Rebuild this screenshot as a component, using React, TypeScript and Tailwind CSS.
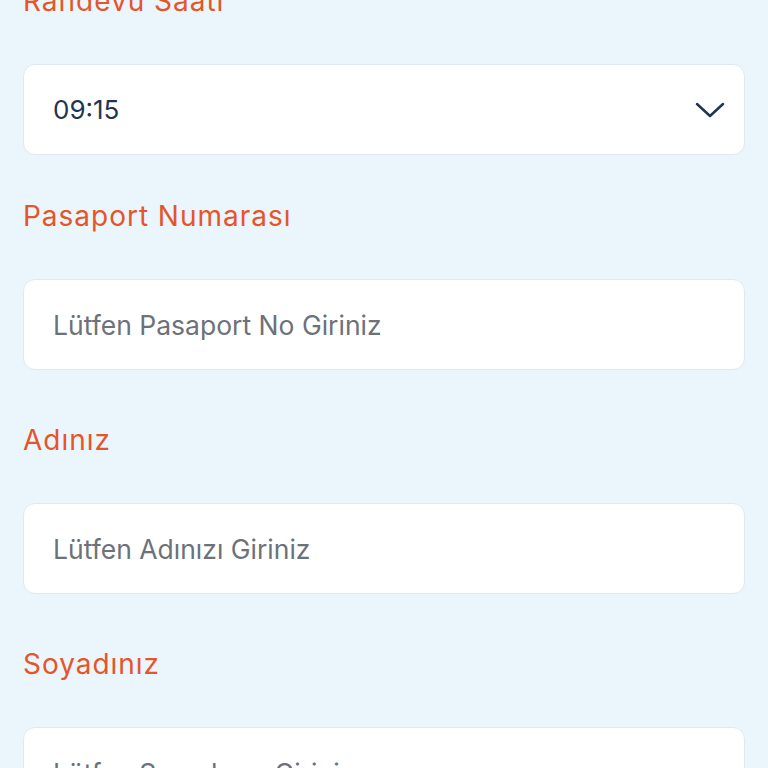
import { ChangeEvent, useState } from 'react';

const font = { fontFamily: 'Inter, "Noto Sans", sans-serif' };

function Chevron() {
  return (
    <svg width="30" height="18" viewBox="0 0 30 18" fill="none" className="shrink-0">
      <path d="M2 3 L15 15 L28 3" stroke="#1f3556" strokeWidth="2.5" strokeLinecap="round" strokeLinejoin="round" />
    </svg>
  );
}

function Label({ children }: { children: string }) {
  return <p className="text-[28px] leading-[34px] tracking-[0.035em] text-[#e5552a]">{children}</p>;
}

function TextField({ label, placeholder }: { label: string; placeholder: string }) {
  const [value, setValue] = useState('');
  return (
    <div className="mt-[53px]">
      <Label>{label}</Label>
      <input
        value={value}
        onChange={(e: ChangeEvent<HTMLInputElement>) => setValue(e.target.value)}
        placeholder={placeholder}
        style={font}
        className="mt-[46px] h-[91px] w-full rounded-[12px] border border-[#e1e9f0] bg-white px-[29px] text-[26.5px] text-[#1f3556] placeholder:text-[#6d7179] outline-none"
      />
    </div>
  );
}

export default function App() {
  return (
    <div className="min-h-screen overflow-hidden bg-[#ebf5fc]" style={font}>
      <div className="-mt-[16px] px-[23px] pb-10">
        <Label>Randevu Saati</Label>
        <div className="mt-[46px] flex h-[91px] items-center justify-between rounded-[12px] border border-[#e1e9f0] bg-white pl-[29px] pr-[19px]">
          <span className="text-[26px] text-[#1f3556]">09:15</span>
          <Chevron />
        </div>
        <div className="-mt-[9px]">
          <TextField label="Pasaport Numarası" placeholder="Lütfen Pasaport No Giriniz" />
        </div>
        <TextField label="Adınız" placeholder="Lütfen Adınızı Giriniz" />
        <TextField label="Soyadınız" placeholder="Lütfen Soyadınızı Giriniz" />
      </div>
    </div>
  );
}
